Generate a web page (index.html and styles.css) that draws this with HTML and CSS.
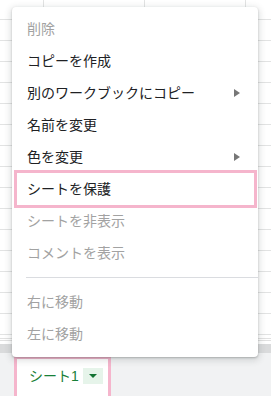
FILE: index.html
```html
<!DOCTYPE html>
<html lang="ja">
<head>
    <meta charset="UTF-8">
    <meta name="viewport" content="width=device-width, initial-scale=1.0">
    <title>シートメニュー</title>
    <link rel="stylesheet" href="styles.css">
</head>
<body>
    <div class="sheet">
        <div class="cells"></div>
        <div class="scroll-area"></div>
        <div class="tab-bar">
            <div class="tab">
                <span class="tab-name">シート1</span>
                <span class="tab-drop"><span class="drop-arrow"></span></span>
            </div>
        </div>
    </div>

    <!-- 시트 탭 컨텍스트 메뉴 -->
    <ul class="menu">
        <li class="menu-item disabled">削除</li>
        <li class="menu-item">コピーを作成</li>
        <li class="menu-item">別のワークブックにコピー<span class="sub-arrow"></span></li>
        <li class="menu-item">名前を変更</li>
        <li class="menu-item">色を変更<span class="sub-arrow"></span></li>
        <li class="menu-item">シートを保護<span class="mark"></span></li>
        <li class="menu-item disabled">シートを非表示</li>
        <li class="menu-item disabled">コメントを表示</li>
        <li class="menu-sep"></li>
        <li class="menu-item disabled">右に移動</li>
        <li class="menu-item disabled">左に移動</li>
    </ul>
</body>
</html>
```

FILE: styles.css
```css
body {
    margin: 0;
    width: 271px;
    height: 396px;
    overflow: hidden;
    position: relative;
    font-family: "Liberation Sans", "Noto Sans CJK JP", sans-serif;
    font-size: 14px;
    color: #202124;
    background: #fff;
}

.sheet {
    display: flex;
    flex-direction: column;
    height: 100%;
}

/* 셀 격자 */
.cells {
    height: 342px;
    background-image:
        linear-gradient(to bottom, #e2e3e3 1px, transparent 1px),
        linear-gradient(to right, #e2e3e3 1px, transparent 1px);
    background-size: 100% 21px, 101px 100%;
    background-position: 0 19px, 43px 0;
}

.scroll-area {
    height: 15px;
    background: linear-gradient(to bottom,
        #e1e1e1 0 1px, #fff 1px 2px, #e1e1e1 2px 3px, #fff 3px 6px, #dadbdc 6px 15px);
}

.tab-bar {
    flex: 1;
    display: flex;
    align-items: flex-start;
    background-color: #f1f2f3;
}

.tab {
    display: flex;
    align-items: center;
    margin: 3px 0 0 14px;
    width: 97px;
    height: 40px;
    box-sizing: border-box;
    border: 3px solid #f5b5cc;
    border-bottom: none;
    padding: 0 0 4px 12px;
    background-color: #fff;
}

.tab-name {
    color: #188038;
    line-height: 20px;
}

.tab-drop {
    display: flex;
    justify-content: center;
    align-items: center;
    width: 20px;
    height: 16px;
    margin-left: 4px;
    background-color: #e6f4ea;
}

.drop-arrow {
    width: 0;
    height: 0;
    border-left: 4px solid transparent;
    border-right: 4px solid transparent;
    border-top: 4px solid #137333;
}

/* 컨텍스트 메뉴 */
.menu {
    position: absolute;
    top: 7px;
    left: 12px;
    width: 246px;
    margin: 0;
    padding: 6px 0 7px;
    list-style: none;
    background-color: #fff;
    border-radius: 4px;
    box-shadow: 0 2px 6px 2px rgba(60, 64, 67, 0.15), 0 1px 2px rgba(60, 64, 67, 0.3);
}

.menu-item {
    position: relative;
    display: flex;
    align-items: center;
    justify-content: space-between;
    height: 32px;
    line-height: 32px;
    padding: 0 18px 0 15px;
}

.menu-item.disabled {
    color: #a2a2a2;
}

.sub-arrow {
    width: 0;
    height: 0;
    border-top: 4px solid transparent;
    border-bottom: 4px solid transparent;
    border-left: 6px solid #777;
}

/* 강조 표시 */
.mark {
    position: absolute;
    top: -3px;
    bottom: -3px;
    left: 2px;
    right: 1px;
    border: 3px solid #f5b5cc;
}

.menu-sep {
    height: 1px;
    margin: 8px 0 8px 14px;
    background-color: #dadce0;
}
```
